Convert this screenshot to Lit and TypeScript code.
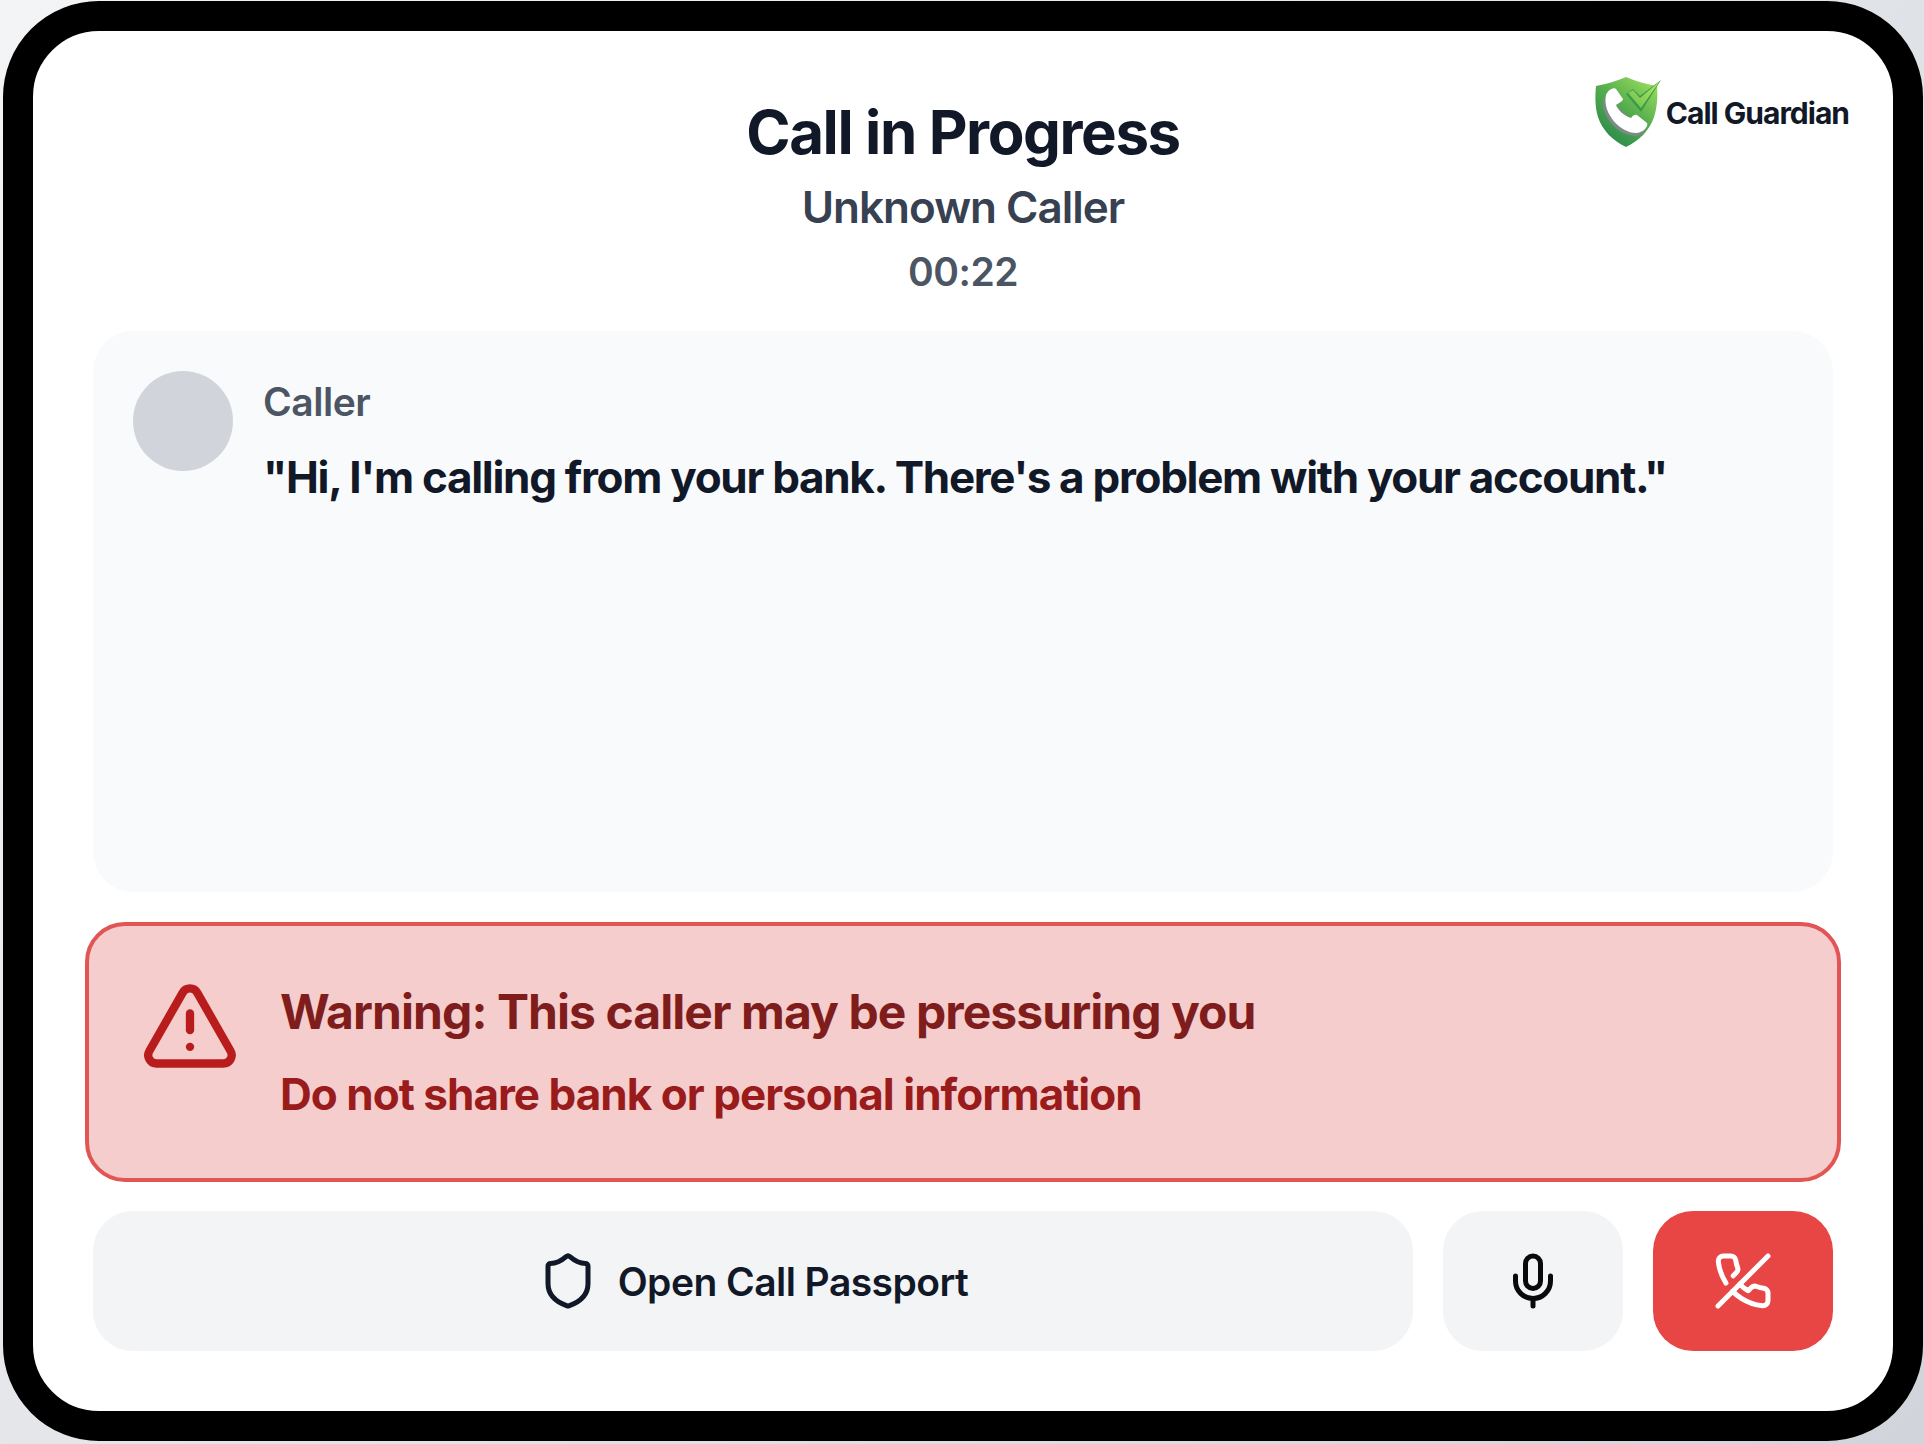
import { LitElement, html, css, svg } from "lit";
import { customElement, state } from "lit/decorators.js";

const shieldIcon = svg`<path d="M20 13c0 5-3.5 7.5-7.66 8.95a1 1 0 0 1-.67-.01C7.5 20.5 4 18 4 13V6a1 1 0 0 1 1-1c2 0 4.5-1.2 6.24-2.72a1.17 1.17 0 0 1 1.52 0C14.51 3.81 17 5 19 5a1 1 0 0 1 1 1z"/>`;
const alertIcon = svg`<path d="m21.73 18-8-14a2 2 0 0 0-3.48 0l-8 14A2 2 0 0 0 4 21h16a2 2 0 0 0 1.73-3"/><path d="M12 9v4"/><path d="M12 17h.01"/>`;
const micIcon = svg`<path d="M12 19v3"/><path d="M19 10v2a7 7 0 0 1-14 0v-2"/><rect x="9" y="2" width="6" height="13" rx="3"/>`;
const phoneOffIcon = svg`<path d="M10.68 13.31a16 16 0 0 0 3.41 2.6l1.27-1.27a2 2 0 0 1 2.11-.45 12.84 12.84 0 0 0 2.81.7 2 2 0 0 1 1.72 2v3a2 2 0 0 1-2.18 2 19.79 19.79 0 0 1-8.63-3.07 19.42 19.42 0 0 1-3.33-2.67m-2.67-3.34a19.79 19.79 0 0 1-3.07-8.63A2 2 0 0 1 4.11 2h3a2 2 0 0 1 2 1.72 12.84 12.84 0 0 0 .7 2.81 2 2 0 0 1-.45 2.11L8.09 9.91"/><line x1="22" x2="2" y1="2" y2="22"/>`;

@customElement("app-root")
export class AppRoot extends LitElement {
  static styles = css`
    :host {
      display: block;
      box-sizing: border-box;
      width: 1924px;
      height: 1444px;
      padding: 1px 0 0 3px;
      background: linear-gradient(135deg, #f3f4f6, #d1d5db);
      font-family: Inter, "Liberation Sans", sans-serif;
      color: #111827;
    }
    .device {
      box-sizing: border-box;
      width: 1920px;
      height: 1440px;
      background: #fff;
      border: 30px solid #000;
      border-radius: 96px;
      padding: 60px;
      display: flex;
      flex-direction: column;
      gap: 30px;
      position: relative;
    }
    .header {
      text-align: center;
      padding: 5px 0 5px;
    }
    h1 {
      margin: 0;
      font-size: 60px;
      line-height: 72px;
      font-weight: 700;
      letter-spacing: -1.42px;
      color: #111827;
    }
    .who {
      margin-top: 12px;
      font-size: 44px;
      line-height: 54px;
      font-weight: 600;
      letter-spacing: -1px;
      color: #374151;
    }
    .timer {
      margin-top: 14px;
      font-size: 39px;
      line-height: 48px;
      font-weight: 600;
      letter-spacing: -0.5px;
      color: #4b5563;
    }
    .logo {
      position: absolute;
      top: 39px;
      right: 44px;
      display: flex;
      align-items: center;
    }
    .logo svg {
      width: 85px;
      height: 85px;
      display: block;
    }
    .logo span {
      margin-left: -4px;
      font-size: 30px;
      font-weight: 700;
      letter-spacing: -1px;
      color: #111827;
    }
    .transcript {
      flex: 1;
      background: #f9fafb;
      border-radius: 40px;
      padding: 40px;
      display: flex;
      gap: 30px;
      align-items: flex-start;
    }
    .avatar {
      width: 100px;
      height: 100px;
      border-radius: 50%;
      background: #d1d5db;
      flex: none;
    }
    .speaker {
      margin-top: 4px;
      font-size: 39px;
      line-height: 54px;
      font-weight: 600;
      letter-spacing: -0.45px;
      color: #4b5563;
    }
    .quote {
      margin-top: 18px;
      font-size: 44px;
      line-height: 60px;
      font-weight: 650;
      letter-spacing: -1.3px;
      color: #111827;
    }
    .alert {
      margin: 0 -8px -1px;
      height: 260px;
      box-sizing: border-box;
      background: #f6cdcd;
      border: 4px solid #e25555;
      border-radius: 40px;
      padding: 54px 51px 0;
      display: flex;
      gap: 40px;
      align-items: flex-start;
    }
    .alert svg {
      width: 100px;
      height: 100px;
      flex: none;
      stroke: #b91c1c;
      margin-top: -4px;
    }
    .alert h2 {
      margin: 0;
      font-size: 48px;
      line-height: 64px;
      font-weight: 700;
      letter-spacing: -0.93px;
      color: #7f1d1d;
    }
    .alert p {
      margin: 20px 0 0;
      font-size: 44px;
      line-height: 60px;
      font-weight: 650;
      letter-spacing: -0.97px;
      color: #991b1b;
    }
    .actions {
      display: flex;
      gap: 30px;
      height: 140px;
    }
    button {
      border: 0;
      border-radius: 40px;
      background: #f3f4f6;
      font: inherit;
      display: flex;
      align-items: center;
      justify-content: center;
      padding: 0;
      width: 180px;
      color: #111827;
    }
    button.passport {
      flex: 1;
      gap: 20px;
      font-size: 39px;
      font-weight: 600;
      letter-spacing: -0.55px;
    }
    button.mic {
      color: #0a0a0a;
    }
    button.end {
      background: #e84545;
      color: #fff;
    }
    .icon {
      width: 60px;
      height: 60px;
      fill: none;
      stroke: currentColor;
      stroke-width: 2;
      stroke-linecap: round;
      stroke-linejoin: round;
    }
  `;

  @state()
  private _elapsed = "00:22";

  private renderLogo() {
    return html`
      <svg viewBox="0 0 85 85" aria-hidden="true">
        <defs>
          <linearGradient id="shieldFill" x1="0.9" y1="0.05" x2="0.25" y2="0.95">
            <stop offset="0" stop-color="#98dc5c" />
            <stop offset="0.5" stop-color="#55ad4e" />
            <stop offset="1" stop-color="#2b8a4b" />
          </linearGradient>
          <linearGradient id="checkFill" x1="1" y1="0" x2="0" y2="1">
            <stop offset="0" stop-color="#b4e866" />
            <stop offset="1" stop-color="#6cc04f" />
          </linearGradient>
        </defs>
        <path d="M11 16C22 14 32 11 41 7C50 11 60 14 72 16C73 26 72 38 69 47C65 60 54 71 41 77C28 71 17 60 13 47C10 37 10 26 11 16Z" fill="url(#shieldFill)" />
        <path d="M18 30C16 46 32 65 50 66C56 66 61 62 61 57L46 49L33 37L26 22Z" fill="#7d8a86" />
        <path d="M21 25C23 20 29 17 31 19L38 29C38 31 34 33 31 35C33 40 39 46 46 48C48 45 50 44 52 45L62 53C64 56 58 63 51 63C36 63 17 44 21 25Z" fill="#fff" />
        <path d="M41 24L56 42L76 10L55 26L48 19Z" fill="#3a9a49" />
        <path d="M43 23L48 20L55 28L75 11L56 38Z" fill="url(#checkFill)" />
      </svg>
      <span>Call Guardian</span>
    `;
  }

  render() {
    return html`
      <div class="device">
        <div class="logo">${this.renderLogo()}</div>
        <header class="header">
          <h1>Call in Progress</h1>
          <div class="who">Unknown Caller</div>
          <div class="timer">${this._elapsed}</div>
        </header>
        <section class="transcript">
          <div class="avatar"></div>
          <div>
            <div class="speaker">Caller</div>
            <div class="quote">"Hi, I'm calling from your bank. There's a problem with your account."</div>
          </div>
        </section>
        <section class="alert">
          <svg class="icon" viewBox="0 0 24 24">${alertIcon}</svg>
          <div>
            <h2>Warning: This caller may be pressuring you</h2>
            <p>Do not share bank or personal information</p>
          </div>
        </section>
        <div class="actions">
          <button class="passport">
            <svg class="icon" viewBox="0 0 24 24">${shieldIcon}</svg>
            Open Call Passport
          </button>
          <button class="mic"><svg class="icon" viewBox="0 0 24 24">${micIcon}</svg></button>
          <button class="end"><svg class="icon" viewBox="0 0 24 24">${phoneOffIcon}</svg></button>
        </div>
      </div>
    `;
  }
}
